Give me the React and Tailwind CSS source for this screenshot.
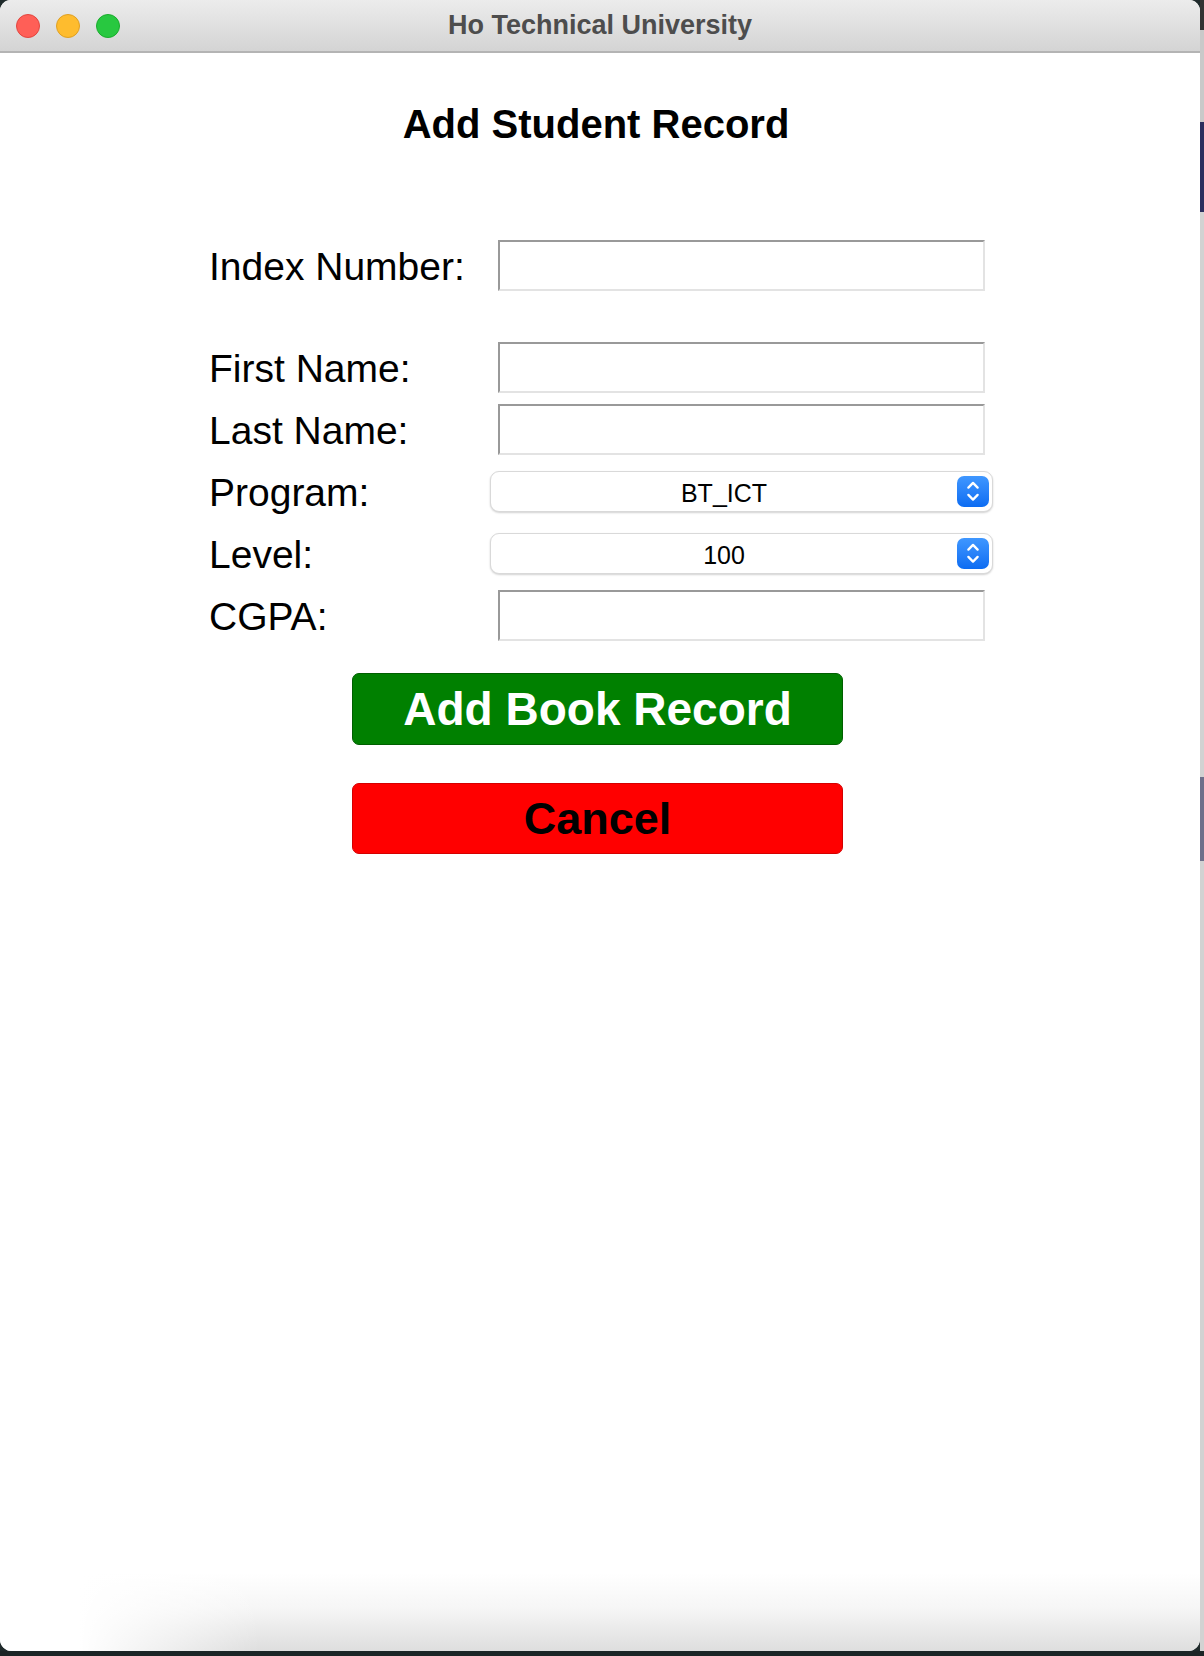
import { ChevronDown, ChevronUp } from 'lucide-react'

const fields = [
  { label: 'First Name:', kind: 'input' },
  { label: 'Last Name:', kind: 'input' },
  { label: 'Program:', kind: 'select', value: 'BT_ICT' },
  { label: 'Level:', kind: 'select', value: '100' },
  { label: 'CGPA:', kind: 'input' },
]

function TextBox() {
  return (
    <div className="w-[487px] h-[51px] bg-white border-2 border-t-[#999999] border-l-[#999999] border-r-[#e3e3e3] border-b-[#e3e3e3]" />
  )
}

function SelectBox({ value }) {
  return (
    <div className="-ml-[8px] w-[503px] h-[41px] flex items-center bg-white rounded-[9px] border border-[#d9d9d9] shadow-[0_1px_2px_rgba(0,0,0,0.18)] pr-[3px]">
      <div className="flex-1 text-center text-[25px] text-black pt-[5px]">{value}</div>
      <div className="w-[32px] h-[31px] rounded-[7px] bg-gradient-to-b from-[#3f97ff] to-[#0b6cf2] flex flex-col items-center justify-center text-white">
        <ChevronUp size={20} strokeWidth={3} className="-mb-[3px]" />
        <ChevronDown size={20} strokeWidth={3} className="-mt-[3px]" />
      </div>
    </div>
  )
}

function Row({ label, children }) {
  return (
    <div className="h-[62px] flex items-center">
      <div className="w-[289px] text-[39px] text-black leading-none pt-[3px]">{label}</div>
      {children}
    </div>
  )
}

export default function App() {
  return (
    <div
      className="w-[1204px] h-[1656px] flex flex-col bg-[#1f2a2b] overflow-hidden"
      style={{ fontFamily: '"Liberation Sans", Arial, sans-serif' }}
    >
      <div className="flex flex-1">
        {/* window */}
        <div className="w-[1200px] h-[1651px] flex flex-col bg-white rounded-t-[11px] rounded-b-[12px] overflow-hidden">
          {/* title bar */}
          <div className="h-[53px] shrink-0 flex items-center relative bg-gradient-to-b from-[#ececec] to-[#d4d4d4] border-b-2 border-[#b4b4b4]">
            <div className="flex items-center gap-[16px] pl-[16px]">
              <div className="w-[24px] h-[24px] rounded-full bg-[#ff5f57] border border-[#e2463f]" />
              <div className="w-[24px] h-[24px] rounded-full bg-[#febc2e] border border-[#dfa023]" />
              <div className="w-[24px] h-[24px] rounded-full bg-[#28c840] border border-[#1aac2c]" />
            </div>
            <div className="absolute inset-0 flex items-center justify-center text-[27px] font-bold text-[#4d4d4d]">
              Ho Technical University
            </div>
          </div>

          {/* content */}
          <div className="flex-1 flex flex-col">
            <h1 className="mt-[48px] text-center text-[40px] leading-[46px] font-bold text-black pr-[8px]">
              Add Student Record
            </h1>

            <div className="mt-[87px] pl-[209px] flex flex-col">
              <Row label="Index Number:">
                <TextBox />
              </Row>
              <div className="h-[40px]" />
              {fields.map((f) => (
                <Row key={f.label} label={f.label}>
                  {f.kind === 'input' ? <TextBox /> : <SelectBox value={f.value} />}
                </Row>
              ))}
            </div>

            <div className="mt-[27px] flex flex-col items-center gap-[38px] pr-[5px]">
              <button className="w-[491px] h-[72px] rounded-[7px] bg-[#008000] border border-[#005f00] text-white text-[46px] font-bold leading-none">
                Add Book Record
              </button>
              <button className="w-[491px] h-[71px] rounded-[7px] bg-[#ff0000] border border-[#d40000] text-black text-[45px] font-bold leading-none">
                Cancel
              </button>
            </div>

            <div className="flex-1" />
            {/* bottom reflection shade */}
            <div className="h-[78px] bg-[linear-gradient(to_right,#ffffff_0px,#ffffff_80px,rgba(255,255,255,0)_260px),linear-gradient(to_bottom,#ffffff,#f6f6f6_45%,#dedede)]" />
          </div>
        </div>

        {/* right edge of desktop behind */}
        <div className="w-[4px] flex flex-col">
          <div className="h-[30px] bg-[#333333]" />
          <div className="h-[92px] bg-[#c9c9c9]" />
          <div className="h-[90px] bg-[#2b2e5e]" />
          <div className="h-[565px] bg-[#d2d2d2]" />
          <div className="h-[84px] bg-[#6e6f8a]" />
          <div className="flex-1 bg-[#d2d2d2]" />
        </div>
      </div>
      <div className="h-[5px] bg-[#1c2526]" />
    </div>
  )
}
